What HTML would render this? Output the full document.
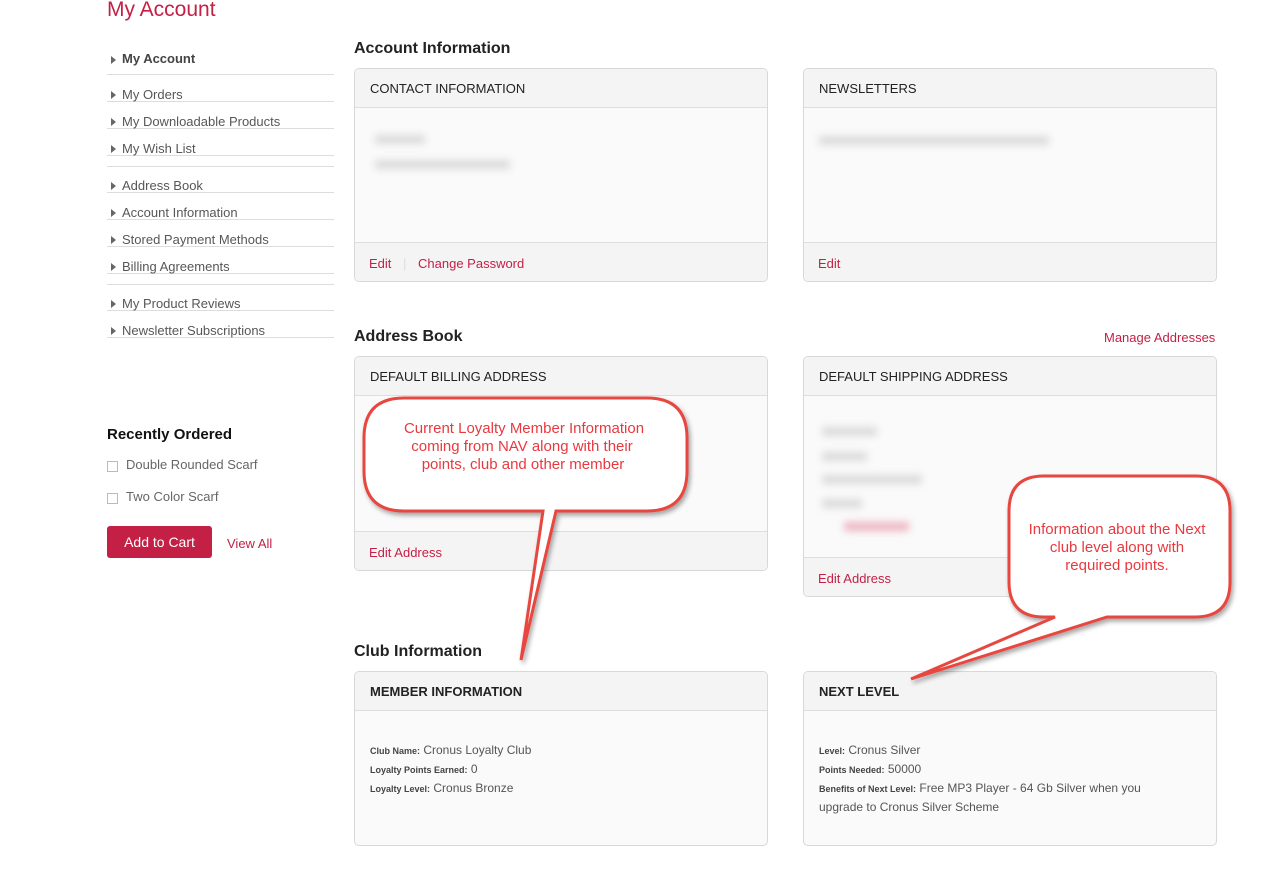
<!DOCTYPE html>
<html><head><meta charset="utf-8"><style>
*{margin:0;padding:0;box-sizing:border-box}
body{width:1271px;height:887px;background:#fff;font-family:"Liberation Sans",sans-serif;color:#333;position:relative;overflow:hidden;font-size:13px}
.a{position:absolute}
.red{color:#c41f45}
.nav{position:absolute;left:107px;width:227px;height:27px;border-bottom:1px solid #ddd;color:#575757;font-size:13px;padding-left:15px;line-height:40px}
.nav:before{content:"";position:absolute;left:4px;top:16px;border-left:5px solid #666;border-top:4px solid transparent;border-bottom:4px solid transparent}
.panel{position:absolute;border:1px solid #d8d8d8;border-radius:5px;background:#fafafa;overflow:hidden}
.ph{height:39px;background:#f4f4f4;border-bottom:1px solid #dedede;padding-left:15px;line-height:39px;font-size:13px;color:#222;text-transform:uppercase}
.pf{position:absolute;left:0;right:0;bottom:0;height:39px;background:#f4f4f4;border-top:1px solid #dedede;padding-left:14px;line-height:42px;color:#c41f45}
.h2{position:absolute;font-size:16px;font-weight:bold;color:#222}
.blur{position:absolute;background:#bbb;filter:blur(4px);opacity:.5;height:9px}
.info{font-size:12px;color:#555;line-height:18px}
.info b{font-size:9px;color:#444}
</style></head><body>
<div class="a red" style="left:107px;top:-2px;font-size:21px">My Account</div>

<div class="nav" style="top:40px;height:35px;line-height:38px;font-weight:bold;color:#444">My Account</div>
<div class="nav" style="top:75px">My Orders</div>
<div class="nav" style="top:102px">My Downloadable Products</div>
<div class="nav" style="top:129px">My Wish List</div>
<div class="a" style="left:107px;top:166px;width:227px;border-top:1px solid #ddd"></div>
<div class="nav" style="top:166px">Address Book</div>
<div class="nav" style="top:193px">Account Information</div>
<div class="nav" style="top:220px">Stored Payment Methods</div>
<div class="nav" style="top:247px">Billing Agreements</div>
<div class="a" style="left:107px;top:284px;width:227px;border-top:1px solid #ddd"></div>
<div class="nav" style="top:284px">My Product Reviews</div>
<div class="nav" style="top:311px">Newsletter Subscriptions</div>

<div class="a" style="left:107px;top:426px;font-size:15px;font-weight:bold;color:#111">Recently Ordered</div>
<div class="a" style="left:107px;top:461px;width:11px;height:11px;border:1px solid #bbb"></div>
<div class="a" style="left:126px;top:457px;color:#666">Double Rounded Scarf</div>
<div class="a" style="left:107px;top:493px;width:11px;height:11px;border:1px solid #bbb"></div>
<div class="a" style="left:126px;top:489px;color:#666">Two Color Scarf</div>
<div class="a" style="left:107px;top:526px;width:105px;height:32px;background:#c41f45;border-radius:3px;color:#fff;font-size:14px;text-align:center;line-height:33px">Add to Cart</div>
<div class="a red" style="left:227px;top:536px">View All</div>

<div class="h2" style="left:354px;top:40px">Account Information</div>
<div class="panel" style="left:354px;top:68px;width:414px;height:214px">
<div class="ph">Contact Information</div>
<div class="blur" style="left:20px;top:66px;width:50px"></div>
<div class="blur" style="left:20px;top:91px;width:135px"></div>
<div class="pf">Edit <span style="color:#ddd;margin:0 8px">|</span> Change Password</div>
</div>
<div class="panel" style="left:803px;top:68px;width:414px;height:214px">
<div class="ph">Newsletters</div>
<div class="blur" style="left:15px;top:67px;width:230px"></div>
<div class="pf">Edit</div>
</div>

<div class="h2" style="left:354px;top:328px">Address Book</div>
<div class="a red" style="left:1104px;top:330px">Manage Addresses</div>
<div class="panel" style="left:354px;top:356px;width:414px;height:215px">
<div class="ph">Default Billing Address</div>
<div class="pf">Edit Address</div>
</div>
<div class="panel" style="left:803px;top:356px;width:414px;height:241px">
<div class="ph">Default Shipping Address</div>
<div class="blur" style="left:18px;top:70px;width:55px"></div>
<div class="blur" style="left:18px;top:95px;width:45px"></div>
<div class="blur" style="left:18px;top:118px;width:100px"></div>
<div class="blur" style="left:18px;top:142px;width:40px"></div>
<div class="blur" style="left:40px;top:165px;width:65px;background:#e0708a"></div>
<div class="pf">Edit Address</div>
</div>

<div class="h2" style="left:354px;top:643px">Club Information</div>
<div class="panel" style="left:354px;top:671px;width:414px;height:175px">
<div class="ph" style="font-weight:bold">Member Information</div>
<div class="info" style="padding:30px 15px 0">
<div><b>Club Name:</b> Cronus Loyalty Club</div>
<div><b>Loyalty Points Earned:</b> 0</div>
<div><b>Loyalty Level:</b> Cronus Bronze</div></div>
</div>
<div class="panel" style="left:803px;top:671px;width:414px;height:175px">
<div class="ph" style="font-weight:bold">Next Level</div>
<div class="info" style="padding:30px 30px 0 15px">
<div><b>Level:</b> Cronus Silver</div>
<div><b>Points Needed:</b> 50000</div>
<div><b>Benefits of Next Level:</b> Free MP3 Player - 64 Gb Silver when you upgrade to Cronus Silver Scheme</div></div>
</div>

<svg class="a" style="left:0;top:0" width="1271" height="887">
<defs><filter id="s" x="-20%" y="-20%" width="140%" height="140%"><feDropShadow dx="2" dy="3" stdDeviation="2.5" flood-color="#000" flood-opacity=".35"/></filter></defs>
<path filter="url(#s)" d="M404 398 H647 Q687 398 687 438 V471 Q687 511 647 511 H556 L521 660 L543 511 H404 Q364 511 364 471 V438 Q364 398 404 398 Z" fill="#fff" stroke="#e8473f" stroke-width="3"/>
<path filter="url(#s)" d="M1044 476 H1195 Q1230 476 1230 511 V582 Q1230 617 1195 617 H1107 L911 679 L1055 617 H1044 Q1009 617 1009 582 V511 Q1009 476 1044 476 Z" fill="#fff" stroke="#e8473f" stroke-width="3"/>
<g font-family="Liberation Sans,sans-serif" font-size="15" fill="#e8393f" text-anchor="middle">
<text x="524" y="433">Current Loyalty Member Information</text>
<text x="522" y="451">coming from NAV along with their</text>
<text x="523" y="469">points, club and other member</text>
<text x="1117" y="534">Information about the Next</text>
<text x="1117" y="552">club level along with</text>
<text x="1117" y="570">required points.</text>
</g>
</svg>
</body></html>
